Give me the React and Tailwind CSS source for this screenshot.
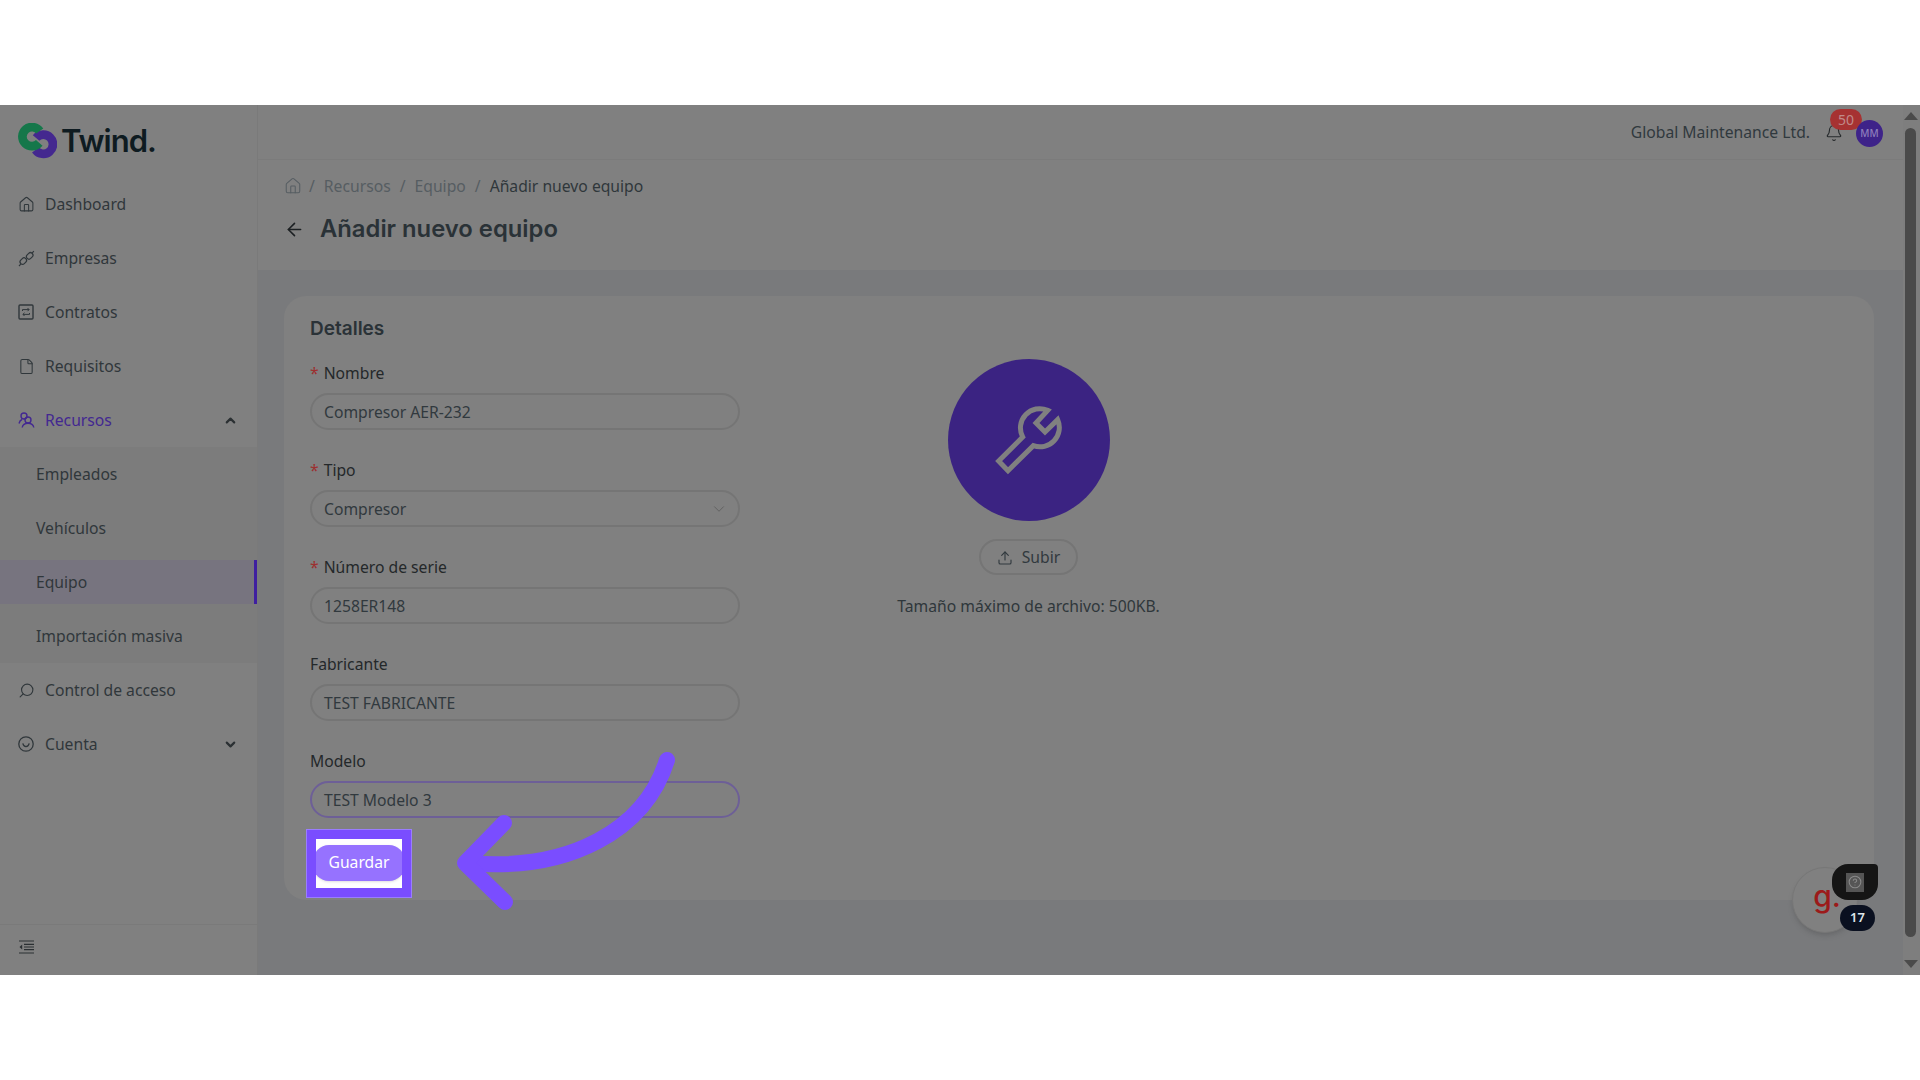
import React from 'react';
import { Home, File, Search, ChevronUp, ChevronDown, ArrowLeft, Bell, Upload, CircleHelp } from 'lucide-react';

const sans = 'font-["Noto_Sans",sans-serif]';

const PlugIcon = () => (
  <svg width="17" height="17" viewBox="0 0 17 17" fill="none" stroke="currentColor" strokeWidth="1.2">
    <rect x="1.800" y="8.600" width="7" height="5" rx="2.400" transform="rotate(-45 5.300 11.100)" />
    <rect x="8.200" y="3.400" width="7" height="5" rx="2.400" transform="rotate(-45 11.700 5.900)" />
    <path d="M1 16l1.800-1.800M14.200 3.200L15.800 1" />
  </svg>
);

const PeopleIcon = () => (
  <svg width="17" height="17" viewBox="0 0 17 17" fill="none" stroke="currentColor" strokeWidth="1.400">
    <circle cx="6" cy="4" r="3" />
    <circle cx="10" cy="8" r="3" />
    <path d="M1 11.500C1.500 9.500 2.500 8 4 7.500M4.200 15.500c.5-2.800 2.800-4.300 5.800-4.300s5.300 1.500 5.800 4.300" />
  </svg>
);

const ContractIcon = () => (
  <svg width="16" height="16" viewBox="0 0 16 16" fill="none" stroke="currentColor" strokeWidth="1.400">
    <rect x="1" y="1" width="14" height="14" rx="1" />
    <path d="M4.500 7V5.600h6.500M9.500 4l1.600 1.600-1.600 1.600M11.500 9v1.400H5M6.500 8.800l-1.600 1.600L6.500 12" strokeWidth="1" />
  </svg>
);

const SmileIcon = () => (
  <svg width="16" height="16" viewBox="0 0 16 16" fill="none" stroke="currentColor" strokeWidth="1.300">
    <circle cx="8" cy="8" r="7.200" />
    <path d="M4.800 7.400c.5 2.200 1.700 3.200 3.200 3.200s2.700-1 3.200-3.200" />
  </svg>
);

const CollapseIcon = () => (
  <svg width="15" height="14" viewBox="0 0 15 14" fill="none" stroke="currentColor" strokeWidth="1.200">
    <path d="M0 1h15M5 4.300h10M5 7h10M5 9.700h10M0 13h15" />
    <path d="M3.200 4.500v5L0.500 7z" fill="currentColor" stroke="none" />
  </svg>
);

const Logo = () => (
  <svg width="39" height="37" viewBox="27 27 112 106" fill="none" strokeWidth="25">
    <path d="M77.500 104A27.500 27.500 0 1 0 79 70" stroke="#44288f" />
    <path d="M89.500 50A27.500 27.500 0 1 0 88 84" stroke="#15774a" />
  </svg>
);

const Wrench = () => (
  <svg width="75" height="75" viewBox="335 190 225 225" fill="none" stroke="#808080" strokeWidth="15">
    <path d="M386 393 L358 364 L430 292 A58 58 0 0 1 505 212 L470 250 L497 277 L535 240 A58 58 0 0 1 462 318 Z" />
  </svg>
);

const NavItem = ({ icon, label, active, chevron }) => (
  <div className={`flex h-[44px] items-center pl-[18px] pr-[19px] text-[15.7px] ${active ? 'text-[#432891]' : 'text-[#30373b]'}`}>
    <span className="flex w-[27px] shrink-0">{icon}</span>
    <span className="flex-1 pt-[2px]">{label}</span>
    {chevron}
  </div>
);

const SubItem = ({ label, active }) => (
  <div className={`flex h-[44px] items-center pl-[36px] pt-[2px] text-[15.7px] text-[#30373b] ${active ? 'border-r-[3px] border-[#3f1fa0] bg-[#77747f]' : ''}`}>
    {label}
  </div>
);

const Sidebar = () => (
  <aside className="flex w-[258px] shrink-0 flex-col border-r border-[#7a7a7a] bg-[#808080]">
    <div className="flex h-[77px] shrink-0 items-center gap-[4px] pl-[18px]">
      <div className="mb-[4px]">
        <Logo />
      </div>
      <span className="mb-[6px] font-['Inter',sans-serif] text-[31px] leading-none font-semibold tracking-[-1px] text-[#0e1b21]">Twind.</span>
    </div>
    <nav className="flex flex-1 flex-col gap-[10px]">
      <NavItem icon={<Home size={17} strokeWidth={1.5} />} label="Dashboard" />
      <NavItem icon={<PlugIcon />} label="Empresas" />
      <NavItem icon={<ContractIcon />} label="Contratos" />
      <NavItem icon={<File size={17} strokeWidth={1.5} />} label="Requisitos" />
      <NavItem
        icon={<PeopleIcon />}
        label="Recursos"
        active
        chevron={<ChevronUp size={15} strokeWidth={3.4} className="text-[#2b3033]" />}
      />
      <div className="-my-[5px] flex flex-col gap-[10px] bg-[#7c7c7c] py-[5px]">
        <SubItem label="Empleados" />
        <SubItem label="Vehículos" />
        <SubItem label="Equipo" active />
        <SubItem label="Importación masiva" />
      </div>
      <NavItem icon={<Search size={17} strokeWidth={1.6} className="-scale-x-100" />} label="Control de acceso" />
      <NavItem
        icon={<SmileIcon />}
        label="Cuenta"
        chevron={<ChevronDown size={15} strokeWidth={3.4} className="text-[#2b3033]" />}
      />
    </nav>
    <div className="flex h-[51px] shrink-0 items-center border-t border-[#7a7a7a] pb-[7px] pl-[19px] text-[#2b3033]">
      <CollapseIcon />
    </div>
  </aside>
);

const Field = ({ label, value, required, select, focused }) => (
  <div className="flex h-[79px] w-[430px] flex-col">
    <label className="flex h-[21px] items-center pt-[2px] text-[15.7px] text-[#24282a]">
      {required && <span className="mr-[5px] text-[#9d2f2f]">*</span>}
      {label}
    </label>
    <div className={`mt-[10px] flex h-[37px] items-center justify-between rounded-full border-2 pl-[12px] pr-[10px] text-[15.7px] text-[#31393e] ${focused ? 'border-[#6d5f97]' : 'border-[#757575]'}`}>
      <span className="pt-[2px]">{value}</span>
      {select && <ChevronDown size={18} strokeWidth={1.2} className="text-[#5d5d5d]" />}
    </div>
  </div>
);

const Header = () => (
  <div className="flex h-[55px] shrink-0 items-center justify-end border-b border-[#7b7b7b] bg-[#808080] pr-[20px]">
    <span className="pt-[2px] text-[15.7px] text-[#30393e]">Global Maintenance Ltd.</span>
    <div className="relative ml-[15px] mr-[13px] mt-[2px] flex items-center text-[#25292b]">
      <Bell size={18} strokeWidth={1.5} />
      <span className="absolute -top-[15px] left-[5px] flex h-[21px] w-[32px] items-center justify-center rounded-full bg-[#a63232] text-[14px] text-[#c08a8a]">50</span>
    </div>
    <div className="relative mt-[2px] flex h-[27px] w-[27px] items-center justify-center rounded-full bg-[#3e2389] text-[10px] font-medium text-[#8e7fbd]">MM</div>
  </div>
);

const Form = () => (
  <div className="flex h-[604px] flex-col rounded-[22px] bg-[#808080] pl-[26px] pt-[22px]">
    <h2 className="font-['Inter',sans-serif] text-[19px] leading-[22px] font-semibold text-[#2a3237]">Detalles</h2>
    <div className="flex">
      <div className="mt-[22px] flex flex-col gap-[18px]">
        <Field label="Nombre" value="Compresor AER-232" required />
        <Field label="Tipo" value="Compresor" required select />
        <Field label="Número de serie" value="1258ER148" required />
        <Field label="Fabricante" value="TEST FABRICANTE" />
        <Field label="Modelo" value="TEST Modelo 3" focused />
      </div>
      <div className="ml-[157px] mt-[19px] flex w-[263px] flex-col items-center">
        <div className="flex h-[162px] w-[162px] items-center justify-center rounded-full bg-[#3b2382]">
          <Wrench />
        </div>
        <button className="mt-[18px] flex h-[36px] w-[99px] items-center justify-center gap-[9px] rounded-full border-2 border-[#757575] pt-[1px] text-[15.7px] text-[#31393e]">
          <Upload size={16} strokeWidth={1.7} />
          Subir
        </button>
        <p className="mt-[20px] whitespace-nowrap text-[15.7px] leading-[22px] text-[#2f373b]">Tamaño máximo de archivo: 500KB.</p>
      </div>
    </div>
  </div>
);

const Main = () => (
  <main className="flex min-w-0 flex-1 flex-col bg-[#797a7c]">
    <Header />
    <div className="flex h-[110px] shrink-0 flex-col bg-[#808080] pl-[26px]">
      <div className="mt-[15px] flex items-center gap-[9px] text-[15.7px] leading-[22px] text-[#565d62]">
        <Home size={18} strokeWidth={1.4} className="-mr-[2px]" />
        <span>/</span>
        <span>Recursos</span>
        <span>/</span>
        <span>Equipo</span>
        <span>/</span>
        <span className="text-[#2f373b]">Añadir nuevo equipo</span>
      </div>
      <div className="mt-[18px] flex items-center gap-[15px]">
        <ArrowLeft size={21} strokeWidth={1.8} className="text-[#1c2023]" />
        <h1 className="font-['Inter',sans-serif] text-[23.8px] leading-[28px] font-semibold text-[#2a3237]">Añadir nuevo equipo</h1>
      </div>
    </div>
    <div className="pl-[26px] pr-[29px] pt-[26px]">
      <Form />
    </div>
  </main>
);

const Scrollbar = () => (
  <div className="flex w-[17px] shrink-0 flex-col items-center bg-[#7e7e7e] pt-[7px] pr-[2px]">
    <div className="h-0 w-0 border-x-[7px] border-b-[8px] border-x-transparent border-b-[#4b4b4b]" />
    <div className="mt-[8px] h-[809px] w-[11px] rounded-full bg-[#4a4a4a]" />
    <div className="mt-[23px] h-0 w-0 border-x-[7px] border-t-[8px] border-x-transparent border-t-[#4b4b4b]" />
  </div>
);

const HelpWidget = () => (
  <div className="absolute left-[1792px] top-[759px] h-[70px] w-[90px]">
    <div className="absolute left-0 top-[3px] flex h-[66px] w-[66px] items-center justify-center rounded-full border border-[#777] bg-[#808080] pl-[4px] shadow-md">
      <span className="mb-[9px] font-['Inter',sans-serif] text-[30px] leading-none font-medium text-[#9c1a1a]">g.</span>
    </div>
    <div className="absolute left-[40px] top-0 flex h-[36px] w-[46px] items-center justify-center rounded-[16px] rounded-tr-[4px] bg-[#151515]">
      <span className="flex h-[19px] w-[18px] items-center justify-center bg-[#555] text-[#8a8a8a]">
        <CircleHelp size={14} strokeWidth={1.8} />
      </span>
    </div>
    <div className="absolute left-[48px] top-[41px] flex h-[26px] w-[35px] items-center justify-center rounded-full bg-[#0a1020] text-[13px] font-semibold text-[#dfe6ea]">17</div>
  </div>
);

// tutorial spotlight over the save button
const Spotlight = () => (
  <div className="absolute left-[306px] top-[724px] h-[69px] w-[106px] border border-[#9a7dff] bg-[#7a4dff] p-[9px]">
    <div className="flex h-[49px] w-[86px] items-center overflow-hidden bg-white pb-[1px]">
      <div className="-mx-[3px] flex h-[36px] w-[92px] shrink-0 items-center justify-center rounded-[16px] bg-[#9672ff] text-[15.7px] text-white shadow-sm">Guardar</div>
    </div>
  </div>
);

const TutorialArrow = () => (
  <svg className="absolute left-[440px] top-[640px]" width="250" height="180" viewBox="440 745 250 180" fill="none" stroke="#7a4dff" strokeWidth="16" strokeLinecap="round" strokeLinejoin="round">
    <path d="M667 760C645 830 570 872 468 863" />
    <path d="M504 823L465 863L505 902" />
  </svg>
);

export default function App() {
  return (
    <div className={`flex h-screen w-full flex-col bg-white ${sans}`}>
      <div className="h-[105px] shrink-0 bg-white" />
      <div className="relative flex h-[870px] shrink-0 overflow-hidden">
        <Sidebar />
        <Main />
        <Scrollbar />
        <HelpWidget />
        <Spotlight />
        <TutorialArrow />
      </div>
      <div className="flex-1 bg-white" />
    </div>
  );
}
